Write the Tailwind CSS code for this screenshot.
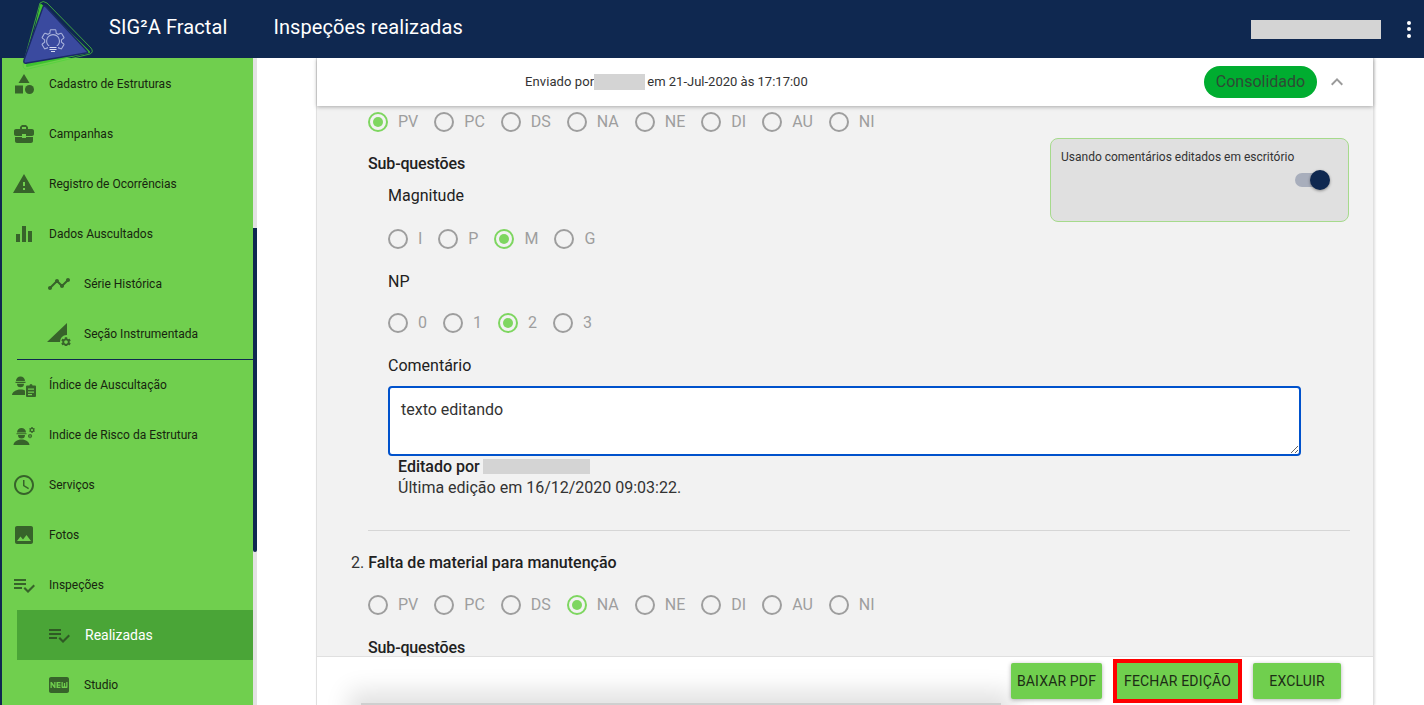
<!DOCTYPE html>
<html lang="pt-BR">
  <head>
    <meta charset="UTF-8" />
    <title>Inspeções realizadas</title>
    <script src="https://cdn.jsdelivr.net/npm/@tailwindcss/browser@4"></script>
  </head>
  <body class="h-screen overflow-hidden flex flex-col bg-white [font-family:Roboto,sans-serif]">
    <!-- Top bar -->
    <header class="relative z-20 h-[58px] shrink-0 bg-[#0f2850] flex items-center text-white">
      <svg class="absolute left-[15px] top-0 w-[90px] h-[75px]" viewBox="0 0 90 75">
        <path d="M25 3 Q28 0 32 3 L76 48 Q79 52 75 54 L13 69 Q8 70 8 65 Z" fill="none" stroke="#4fd33a" stroke-width="0.7" />
        <path d="M26 5 L74 52 L12 66 Z" fill="#3fc42f" stroke="#3fc42f" stroke-width="2" stroke-linejoin="round" />
        <path d="M28 7 Q29 5 31 7 L72 51 Q74 53 71 53 L12 63 Q8 64 9 60 Z" fill="#3a4a9f" stroke="#1a2a66" stroke-width="1.4" />
        <g transform="translate(24 27) scale(1.17)" fill="none" stroke="#aab4dc" stroke-width="0.9">
          <path d="M19.14 12.94c.04-.3.06-.61.06-.94 0-.32-.02-.64-.07-.94l2.03-1.58c.18-.14.23-.41.12-.61l-1.92-3.32c-.12-.22-.37-.29-.59-.22l-2.39.96c-.5-.38-1.03-.7-1.62-.94l-.36-2.54c-.04-.24-.24-.41-.48-.41h-3.84c-.24 0-.43.17-.47.41l-.36 2.54c-.59.24-1.13.57-1.62.94l-2.39-.96c-.22-.08-.47 0-.59.22L2.74 8.87c-.12.21-.08.47.12.61l2.03 1.58c-.05.3-.09.63-.09.94s.02.64.07.94l-2.03 1.58c-.18.14-.23.41-.12.61l1.92 3.32c.12.22.37.29.59.22l2.39-.96c.5.38 1.03.7 1.62.94l.36 2.54c.05.24.24.41.48.41h3.84c.24 0 .44-.17.47-.41l.36-2.54c.59-.24 1.13-.56 1.62-.94l2.39.96c.22.08.47 0 .59-.22l1.92-3.32c.12-.22.07-.47-.12-.61l-2.01-1.58z" />
          <path d="M9.5 17c-2-1.200-3-3-3-5a5.500 5.500 0 0 1 11 0c0 2-1 3.800-3 5" />
        </g>
        <rect x="33" y="46" width="10" height="9" fill="#3a4a9f" />
        <path d="M34.500 47.500h7M34.500 49.500h7M36 51.500h4" stroke="#d5daf0" stroke-width="1.200" />
      </svg>
      <span class="ml-[109px] mb-1 text-[20px] tracking-[0.1px]">SIG²A Fractal</span>
      <span class="ml-[46px] mb-1 text-[20px] tracking-[0.1px]">Inspeções realizadas</span>
      <span class="ml-auto mt-[1px] w-[130px] h-[19px] bg-[#d4d4d4]"></span>
      <span class="ml-[26px] mr-[13px] flex flex-col gap-[2.5px]">
        <i class="block w-[4px] h-[4px] rounded-full bg-white"></i>
        <i class="block w-[4px] h-[4px] rounded-full bg-white"></i>
        <i class="block w-[4px] h-[4px] rounded-full bg-white"></i>
      </span>
    </header>

    <div class="flex flex-1 min-h-0">
      <!-- Sidebar -->
      <aside class="w-[253px] shrink-0 bg-[#70cf4e] border-l-2 border-[#0f2850] pt-px overflow-hidden text-[12px] text-[#17260f]">
        <div class="h-[50px] flex items-center">
          <svg class="ml-[10px] w-6 h-6 fill-[#37632a]" viewBox="0 0 24 24"><path d="M12 2l-5.500 9h11z" /><circle cx="17.500" cy="17.500" r="4.500" /><path d="M3 13.500h8v8H3z" /></svg>
          <span class="ml-[13px]">Cadastro de Estruturas</span>
        </div>
        <div class="h-[50px] flex items-center">
          <svg class="ml-[10px] w-6 h-6 fill-[#37632a]" viewBox="0 0 24 24"><path d="M10 16v-1H3.010L3 19c0 1.110.89 2 2 2h14c1.110 0 2-.89 2-2v-4h-7v1h-4zm10-9h-4.010V5l-2-2h-4l-2 2v2H4c-1.100 0-2 .9-2 2v3c0 1.110.89 2 2 2h6v-2h4v2h6c1.100 0 2-.9 2-2V9c0-1.100-.9-2-2-2zm-6 0h-4V5h4v2z" /></svg>
          <span class="ml-[13px]">Campanhas</span>
        </div>
        <div class="h-[50px] flex items-center">
          <svg class="ml-[10px] w-6 h-6 fill-[#37632a]" viewBox="0 0 24 24"><path d="M1 21h22L12 2 1 21zm12-3h-2v-2h2v2zm0-4h-2v-4h2v4z" /></svg>
          <span class="ml-[13px]">Registro de Ocorrências</span>
        </div>
        <div class="h-[50px] flex items-center">
          <svg class="ml-[10px] w-6 h-6 fill-[#37632a]" viewBox="0 0 24 24"><path d="M10 20h4V4h-4v16zm-6 0h4v-8H4v8zM16 9v11h4V9h-4z" /></svg>
          <span class="ml-[13px]">Dados Auscultados</span>
        </div>
        <div class="h-[50px] flex items-center">
          <svg class="ml-[45px] w-6 h-6 fill-[#37632a]" viewBox="0 0 24 24"><path d="M23 8c0 1.100-.9 2-2 2-.18 0-.35-.02-.51-.07l-3.560 3.550c.05.16.07.34.07.52 0 1.100-.9 2-2 2s-2-.9-2-2c0-.18.02-.36.07-.52l-2.550-2.550c-.16.05-.34.07-.52.07s-.36-.02-.52-.07l-4.550 4.560c.05.16.07.33.07.51 0 1.100-.9 2-2 2s-2-.9-2-2 .9-2 2-2c.18 0 .35.02.51.07l4.560-4.550C8.020 9.360 8 9.180 8 9c0-1.100.9-2 2-2s2 .9 2 2c0 .18-.02.36-.07.52l2.550 2.550c.16-.05.34-.07.52-.07s.36.02.52.07l3.550-3.560C19.020 8.350 19 8.180 19 8c0-1.100.9-2 2-2s2 .9 2 2z" /></svg>
          <span class="ml-[13px]">Série Histórica</span>
        </div>
        <div class="h-[50px] flex items-center">
          <svg class="ml-[45px] w-6 h-6 fill-[#37632a]" viewBox="0 0 24 24">
            <path d="M20 1V13A6.500 6.500 0 0 0 13 20H0z" />
            <g transform="translate(13 14) scale(0.5)"><path d="M19.140 12.940c.04-.3.06-.61.06-.94 0-.32-.02-.64-.07-.94l2.030-1.580c.18-.14.23-.41.12-.61l-1.920-3.320c-.12-.22-.37-.29-.59-.22l-2.390.96c-.5-.38-1.030-.7-1.620-.94l-.36-2.540c-.04-.24-.24-.41-.48-.41h-3.840c-.24 0-.43.17-.47.41l-.36 2.540c-.59.24-1.130.57-1.620.94l-2.390-.96c-.22-.08-.47 0-.59.22L2.740 8.870c-.12.21-.08.47.12.61l2.030 1.580c-.05.3-.09.63-.09.94s.02.64.07.94l-2.030 1.580c-.18.14-.23.41-.12.61l1.920 3.320c.12.22.37.29.59.22l2.390-.96c.5.38 1.030.7 1.620.94l.36 2.540c.05.24.24.41.48.41h3.840c.24 0 .44-.17.47-.41l.36-2.540c.59-.24 1.130-.56 1.620-.94l2.390.96c.22.08.47 0 .59-.22l1.920-3.320c.12-.22.07-.47-.12-.61l-2.010-1.580zM12 15.600c-1.980 0-3.600-1.620-3.600-3.600s1.620-3.600 3.600-3.600 3.600 1.620 3.600 3.600-1.620 3.600-3.600 3.600z" /></g>
          </svg>
          <span class="ml-[13px]">Seção Instrumentada</span>
        </div>
        <div class="ml-[15px] h-px bg-[#0f2850]"></div>
        <div class="h-[50px] flex items-center">
          <svg class="ml-[10px] w-[26px] h-6 fill-[#37632a]" viewBox="0 0 26 24">
            <path d="M4 8a4.500 4.500 0 0 1 9 0zM3.500 8.800h10V10h-10z" />
            <path d="M5 10.800h7a3.500 3.500 0 0 1-7 0zM0 22c0-3 4-5.500 8.500-5.500 2 0 4 .5 4.500 1V22z" />
            <path fill-rule="evenodd" d="M15 12.500h2.500a1.500 1.500 0 0 1 3 0H23a1 1 0 0 1 1 1V23a1 1 0 0 1-1 1H15a1 1 0 0 1-1-1V13.500a1 1 0 0 1 1-1zM16 15.500v1.300h6v-1.300zm0 3v1.300h6v-1.300zm0 2.500v1.200h4V21z" />
          </svg>
          <span class="ml-[11px]">Índice de Auscultação</span>
        </div>
        <div class="h-[50px] flex items-center">
          <svg class="ml-[11px] w-6 h-6 fill-[#37632a]" viewBox="0 0 24 24">
            <path d="M4 9.500a4.500 4.500 0 0 1 9 0zM3.500 10.200h10v1h-10z" />
            <path d="M5 12h7a3.500 3.500 0 0 1-7 0zM0.500 22c0-3 3.500-5.500 8-5.500s8 2.500 8 5.500z" />
            <g transform="translate(15.400 3.400) scale(0.3)"><path d="M19.140 12.940c.04-.3.06-.61.06-.94 0-.32-.02-.64-.07-.94l2.030-1.580c.18-.14.23-.41.12-.61l-1.920-3.320c-.12-.22-.37-.29-.59-.22l-2.390.96c-.5-.38-1.030-.7-1.620-.94l-.36-2.540c-.04-.24-.24-.41-.48-.41h-3.840c-.24 0-.43.17-.47.41l-.36 2.540c-.59.24-1.130.57-1.620.94l-2.390-.96c-.22-.08-.47 0-.59.22L2.740 8.870c-.12.21-.08.47.12.61l2.030 1.580c-.05.3-.09.63-.09.94s.02.64.07.94l-2.030 1.580c-.18.14-.23.41-.12.61l1.920 3.320c.12.22.37.29.59.22l2.390-.96c.5.38 1.030.7 1.620.94l.36 2.540c.05.24.24.41.48.41h3.840c.24 0 .44-.17.47-.41l.36-2.540c.59-.24 1.130-.56 1.620-.94l2.390.96c.22.08.47 0 .59-.22l1.920-3.320c.12-.22.07-.47-.12-.61l-2.010-1.580zM12 15.600c-1.980 0-3.600-1.620-3.600-3.600s1.620-3.600 3.600-3.600 3.600 1.620 3.600 3.600-1.620 3.600-3.600 3.600z" /></g>
            <g transform="translate(14.400 10.400) scale(0.22)"><path d="M19.140 12.940c.04-.3.06-.61.06-.94 0-.32-.02-.64-.07-.94l2.030-1.580c.18-.14.23-.41.12-.61l-1.920-3.320c-.12-.22-.37-.29-.59-.22l-2.390.96c-.5-.38-1.030-.7-1.620-.94l-.36-2.540c-.04-.24-.24-.41-.48-.41h-3.840c-.24 0-.43.17-.47.41l-.36 2.540c-.59.24-1.130.57-1.620.94l-2.390-.96c-.22-.08-.47 0-.59.22L2.740 8.870c-.12.21-.08.47.12.61l2.030 1.580c-.05.3-.09.63-.09.94s.02.64.07.94l-2.030 1.580c-.18.14-.23.41-.12.61l1.920 3.320c.12.22.37.29.59.22l2.390-.96c.5.38 1.030.7 1.620.94l.36 2.540c.05.24.24.41.48.41h3.840c.24 0 .44-.17.47-.41l.36-2.540c.59-.24 1.130-.56 1.620-.94l2.390.96c.22.08.47 0 .59-.22l1.920-3.320c.12-.22.07-.47-.12-.61l-2.010-1.580zM12 15.600c-1.980 0-3.600-1.620-3.600-3.600s1.620-3.600 3.600-3.600 3.600 1.620 3.600 3.600-1.620 3.600-3.600 3.600z" /></g>
          </svg>
          <span class="ml-[12px]">Indice de Risco da Estrutura</span>
        </div>
        <div class="h-[50px] flex items-center">
          <svg class="ml-[10px] w-6 h-6 fill-[#37632a]" viewBox="0 0 24 24"><path d="M11.990 2C6.470 2 2 6.480 2 12s4.470 10 9.990 10C17.520 22 22 17.520 22 12S17.520 2 11.990 2zM12 20c-4.420 0-8-3.580-8-8s3.580-8 8-8 8 3.580 8 8-3.580 8-8 8zm.5-13H11v6l5.250 3.150.75-1.230-4.500-2.670z" /></svg>
          <span class="ml-[13px]">Serviços</span>
        </div>
        <div class="h-[50px] flex items-center">
          <svg class="ml-[10px] w-6 h-6 fill-[#37632a]" viewBox="0 0 24 24"><path d="M21 19V5c0-1.100-.9-2-2-2H5c-1.100 0-2 .9-2 2v14c0 1.100.9 2 2 2h14c1.100 0 2-.9 2-2zM8.500 13.500l2.500 3.010L14.500 12l4.500 6H5l3.500-4.500z" /></svg>
          <span class="ml-[13px]">Fotos</span>
        </div>
        <div class="h-[50px] flex items-center">
          <svg class="ml-[10px] w-6 h-6 fill-[#37632a]" viewBox="0 0 24 24"><path d="M14 10H2v2h12v-2zm0-4H2v2h12V6zM2 16h8v-2H2v2zm19.500-4.500L23 13l-6.990 7-4.510-4.500L13 14l3.010 3 5.490-5.500z" /></svg>
          <span class="ml-[13px]">Inspeções</span>
        </div>
        <div class="h-[50px] ml-[15px] bg-[#4aa537] flex items-center">
          <svg class="ml-[30px] w-6 h-6 fill-[#2f5a24]" viewBox="0 0 24 24"><path d="M14 10H2v2h12v-2zm0-4H2v2h12V6zM2 16h8v-2H2v2zm19.500-4.500L23 13l-6.990 7-4.510-4.500L13 14l3.010 3 5.490-5.500z" /></svg>
          <span class="ml-[14px] text-[14px] text-white">Realizadas</span>
        </div>
        <div class="h-[50px] flex items-center">
          <svg class="ml-[45px] w-6 h-6 fill-[#37632a]" viewBox="0 0 24 24"><path d="M20 4H4c-1.110 0-1.990.89-1.990 2L2 18c0 1.110.89 2 2 2h16c1.110 0 2-.89 2-2V6c0-1.110-.89-2-2-2zM8.500 15H7.300l-2.550-3.500V15H3.500V9h1.250l2.500 3.500V9H8.500v6zm5-4.740H11v1.120h2.500v1.260H11v1.110h2.500V15h-4V9h4v1.260zm7 3.740c0 .55-.45 1-1 1h-4c-.55 0-1-.45-1-1V9h1.250v4.510h1.130V9.990h1.250v3.510h1.120V9h1.250v5z" /></svg>
          <span class="ml-[13px]">Studio</span>
        </div>
      </aside>

      <!-- Scrollbar -->
      <div class="w-[4px] shrink-0 bg-[#e2e2e2] pt-[170px]">
        <div class="h-[324px] bg-[#0f2850] rounded-b-[2px]"></div>
      </div>

      <!-- Card -->
      <main class="flex-1 min-w-0 pl-[59px] pr-[50px]">
        <div class="h-full flex flex-col border-l border-r border-[#e0e0e0] shadow-[1px_0_2px_rgba(0,0,0,0.12)]">
          <div class="relative z-10 h-[48px] shrink-0 bg-white shadow-[0_1px_4px_rgba(0,0,0,0.3)] flex items-center text-[13px] text-[#333]">
            <span class="ml-[208px] tracking-[0.1px]">Enviado por</span>
            <span class="w-[51px] h-[16px] bg-[#d4d4d4]"></span>
            <span class="ml-[2px]">em 21-Jul-2020 às 17:17:00</span>
            <span class="ml-auto h-[32px] w-[113px] rounded-full bg-[#00ad30] flex items-center justify-center text-[16px] text-[#2e4a35]">Consolidado</span>
            <svg class="ml-[8px] mr-[24px] w-6 h-6 fill-[#9a9a9a]" viewBox="0 0 24 24"><path d="M12 8l-6 6 1.410 1.410L12 10.830l4.590 4.580L18 14z" /></svg>
          </div>

          <div class="relative flex-1 min-h-0 overflow-hidden bg-[#f2f2f2] pl-[51px] pr-[23px] pt-[6px] text-[16px] text-[#212121]">
            <!-- Comment mode notice -->
            <div class="absolute left-[733px] top-[32px] w-[299px] h-[84px] rounded-[8px] border border-[#a6da8c] bg-[#e0e0e0] px-[10px] pt-[10px] text-[12px] text-[#333] leading-[16px]">
              Usando comentários editados em escritório
              <div class="relative mt-[8px] ml-[234px] w-[33px] h-[14px] rounded-full bg-[#a8aebc]">
                <span class="absolute right-[-2px] top-[-3px] w-[20px] h-[20px] rounded-full bg-[#0f2850] shadow-[0_1px_3px_rgba(0,0,0,0.4)]"></span>
              </div>
            </div>

            <div class="flex gap-4 h-5 text-[#9e9e9e]">
              <label class="flex items-center gap-[10px]"><span class="w-5 h-5 rounded-full border-2 border-[#7ed660] flex items-center justify-center"><i class="block w-[10px] h-[10px] rounded-full bg-[#7ed660]"></i></span>PV</label>
              <label class="flex items-center gap-[10px]"><span class="w-5 h-5 rounded-full border-2 border-[#9e9e9e]"></span>PC</label>
              <label class="flex items-center gap-[10px]"><span class="w-5 h-5 rounded-full border-2 border-[#9e9e9e]"></span>DS</label>
              <label class="flex items-center gap-[10px]"><span class="w-5 h-5 rounded-full border-2 border-[#9e9e9e]"></span>NA</label>
              <label class="flex items-center gap-[10px]"><span class="w-5 h-5 rounded-full border-2 border-[#9e9e9e]"></span>NE</label>
              <label class="flex items-center gap-[10px]"><span class="w-5 h-5 rounded-full border-2 border-[#9e9e9e]"></span>DI</label>
              <label class="flex items-center gap-[10px]"><span class="w-5 h-5 rounded-full border-2 border-[#9e9e9e]"></span>AU</label>
              <label class="flex items-center gap-[10px]"><span class="w-5 h-5 rounded-full border-2 border-[#9e9e9e]"></span>NI</label>
            </div>

            <p class="mt-[20px] leading-6 font-medium tracking-[-0.15px]">Sub-questões</p>

            <div class="ml-[20px]">
              <p class="mt-[8px] leading-6">Magnitude</p>
              <div class="mt-[21px] flex gap-4 h-5 text-[#9e9e9e]">
                <label class="flex items-center gap-[10px]"><span class="w-5 h-5 rounded-full border-2 border-[#9e9e9e]"></span>I</label>
                <label class="flex items-center gap-[10px]"><span class="w-5 h-5 rounded-full border-2 border-[#9e9e9e]"></span>P</label>
                <label class="flex items-center gap-[10px]"><span class="w-5 h-5 rounded-full border-2 border-[#7ed660] flex items-center justify-center"><i class="block w-[10px] h-[10px] rounded-full bg-[#7ed660]"></i></span>M</label>
                <label class="flex items-center gap-[10px]"><span class="w-5 h-5 rounded-full border-2 border-[#9e9e9e]"></span>G</label>
              </div>

              <p class="mt-[21px] leading-6">NP</p>
              <div class="mt-[19px] flex gap-4 h-5 text-[#9e9e9e]">
                <label class="flex items-center gap-[10px]"><span class="w-5 h-5 rounded-full border-2 border-[#9e9e9e]"></span>0</label>
                <label class="flex items-center gap-[10px]"><span class="w-5 h-5 rounded-full border-2 border-[#9e9e9e]"></span>1</label>
                <label class="flex items-center gap-[10px]"><span class="w-5 h-5 rounded-full border-2 border-[#7ed660] flex items-center justify-center"><i class="block w-[10px] h-[10px] rounded-full bg-[#7ed660]"></i></span>2</label>
                <label class="flex items-center gap-[10px]"><span class="w-5 h-5 rounded-full border-2 border-[#9e9e9e]"></span>3</label>
              </div>

              <p class="mt-[21px] leading-6">Comentário</p>
              <textarea class="mt-[8px] block w-[913px] h-[70px] rounded-[4px] border-2 border-[#0052cc] bg-white pl-[11px] pt-[10px] leading-6 text-[#333] outline-none">texto editando</textarea>
              <div class="ml-[10px] leading-[21px] text-[#333]">
                <p class="flex items-center font-medium text-[#212121]">Editado por<span class="ml-[3px] w-[107px] h-[15px] bg-[#d4d4d4]"></span></p>
                <p>Última edição em 16/12/2020 09:03:22.</p>
              </div>
            </div>

            <div class="mt-[32px] h-px bg-[#d6d6d6]"></div>

            <p class="mt-[20px] -ml-[17px] leading-6"><span class="text-[#333]">2.</span> <span class="font-medium">Falta de material para manutenção</span></p>

            <div class="mt-[20px] flex gap-4 h-5 text-[#9e9e9e]">
              <label class="flex items-center gap-[10px]"><span class="w-5 h-5 rounded-full border-2 border-[#9e9e9e]"></span>PV</label>
              <label class="flex items-center gap-[10px]"><span class="w-5 h-5 rounded-full border-2 border-[#9e9e9e]"></span>PC</label>
              <label class="flex items-center gap-[10px]"><span class="w-5 h-5 rounded-full border-2 border-[#9e9e9e]"></span>DS</label>
              <label class="flex items-center gap-[10px]"><span class="w-5 h-5 rounded-full border-2 border-[#7ed660] flex items-center justify-center"><i class="block w-[10px] h-[10px] rounded-full bg-[#7ed660]"></i></span>NA</label>
              <label class="flex items-center gap-[10px]"><span class="w-5 h-5 rounded-full border-2 border-[#9e9e9e]"></span>NE</label>
              <label class="flex items-center gap-[10px]"><span class="w-5 h-5 rounded-full border-2 border-[#9e9e9e]"></span>DI</label>
              <label class="flex items-center gap-[10px]"><span class="w-5 h-5 rounded-full border-2 border-[#9e9e9e]"></span>AU</label>
              <label class="flex items-center gap-[10px]"><span class="w-5 h-5 rounded-full border-2 border-[#9e9e9e]"></span>NI</label>
            </div>

            <p class="mt-[21px] leading-6 font-medium tracking-[-0.15px]">Sub-questões</p>
          </div>

          <!-- Actions -->
          <div class="relative h-[49px] shrink-0 overflow-hidden bg-white border-t border-[#e0e0e0] flex items-center justify-end pr-[32px] text-[14px] text-[#1d2d16] tracking-[0.15px]">
            <div class="absolute left-[44px] top-[46px] w-[640px] h-10 bg-[#cfcfcf] shadow-[0_0_24px_12px_rgba(0,0,0,0.12)]"></div>
            <button class="relative w-[91px] h-[36px] rounded-[2px] bg-[#70cf4e] shadow-[0_1px_4px_rgba(0,0,0,0.3)]">BAIXAR PDF</button>
            <button class="relative ml-[11px] w-[129px] h-[44px] border-4 border-[#ff0000] bg-[#70cf4e]">FECHAR EDIÇÃO</button>
            <button class="relative ml-[11px] w-[88px] h-[36px] rounded-[2px] bg-[#70cf4e] shadow-[0_1px_4px_rgba(0,0,0,0.3)]">EXCLUIR</button>
          </div>
        </div>
      </main>
    </div>
  </body>
</html>
